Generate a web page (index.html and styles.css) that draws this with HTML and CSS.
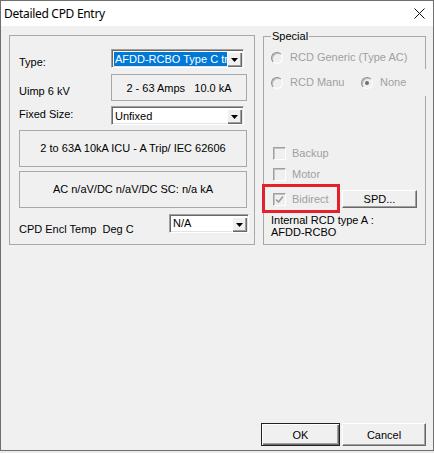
FILE: index.html
```html
<!DOCTYPE html>
<html lang="en">
<head>
    <meta charset="UTF-8">
    <title>Detailed CPD Entry</title>
    <link rel="stylesheet" href="styles.css">
</head>
<body>
    <div class="window">
        <div class="titlebar">
            <span class="title">Detailed CPD Entry</span>
            <svg class="close" width="11" height="11" viewBox="0 0 11 11">
                <path d="M0.5 0.5L10.5 10.5M10.5 0.5L0.5 10.5" stroke="#111" stroke-width="1"/>
            </svg>
        </div>

        <div class="client">
            <div class="panels">
                <div class="group left-group">
                    <div class="row row-type">
                        <span class="label label-type">Type:</span>
                        <div class="combo combo-main">
                            <span class="combo-text selected">AFDD-RCBO Type C trip</span>
                            <span class="drop"><svg width="7" height="4" viewBox="0 0 7 4"><path d="M0 0H7L3.5 4Z" fill="#000"/></svg></span>
                        </div>
                    </div>
                    <div class="row row-uimp">
                        <span class="label label-uimp">Uimp 6 kV</span>
                        <div class="info info-small">2 - 63 Amps&nbsp;&nbsp;&nbsp;10.0 kA</div>
                    </div>
                    <div class="row row-fixed">
                        <span class="label label-fixed">Fixed Size:</span>
                        <div class="combo combo-main">
                            <span class="combo-text">Unfixed</span>
                            <span class="drop"><svg width="7" height="4" viewBox="0 0 7 4"><path d="M0 0H7L3.5 4Z" fill="#000"/></svg></span>
                        </div>
                    </div>
                    <div class="info info-wide info-a">2 to 63A 10kA ICU - A Trip/ IEC 62606</div>
                    <div class="info info-wide info-b">AC n/aV/DC n/aV/DC SC: n/a kA</div>
                    <div class="row row-temp">
                        <span class="label label-temp">CPD Encl Temp&nbsp; Deg C</span>
                        <div class="combo combo-temp">
                            <span class="combo-text top">N/A</span>
                            <span class="drop"><svg width="7" height="4" viewBox="0 0 7 4"><path d="M0 0H7L3.5 4Z" fill="#000"/></svg></span>
                        </div>
                    </div>
                </div>

                <div class="group special-group">
                    <span class="caption">Special</span>
                    <div class="opt-row opt-first">
                        <span class="radio"></span>
                        <span class="disabled">RCD Generic (Type AC)</span>
                    </div>
                    <div class="opt-row opt-second">
                        <span class="radio"></span>
                        <span class="disabled opt-manu">RCD Manu</span>
                        <span class="radio checked"></span>
                        <span class="disabled">None</span>
                    </div>
                    <div class="check-row check-backup">
                        <span class="check"></span>
                        <span class="disabled">Backup</span>
                    </div>
                    <div class="check-row check-motor">
                        <span class="check"></span>
                        <span class="disabled">Motor</span>
                    </div>
                    <div class="check-row check-bidirect">
                        <div class="check-item">
                            <span class="check"><svg width="9" height="9" viewBox="0 0 9 9"><path d="M1 4.5L3.5 7L8 1.5" stroke="#9c9c9c" stroke-width="1.6" fill="none"/></svg></span>
                            <span class="disabled">Bidirect</span>
                        </div>
                        <button class="btn btn-spd">SPD...</button>
                    </div>
                    <div class="internal">Internal RCD type A :<br>AFDD-RCBO</div>
                    <div class="highlight"></div>
                </div>
            </div>

            <div class="buttons">
                <button class="btn btn-ok default">OK</button>
                <button class="btn btn-cancel">Cancel</button>
            </div>
        </div>
    </div>
</body>
</html>
```

FILE: styles.css
```css
body {
    margin: 0;
    background-color: #ececec;
    font-family: "Liberation Sans", Arial, sans-serif;
    font-size: 11px;
    color: #000;
}

.window {
    width: 434px;
    height: 451px;
    box-sizing: border-box;
    border: 1px solid #6f6f6f;
    background-color: #f0f0f0;
    display: flex;
    flex-direction: column;
}

.titlebar {
    height: 25px;
    flex: none;
    background-color: #fff;
    display: flex;
    align-items: center;
    justify-content: space-between;
    padding: 0 8px 0 3px;
}

.titlebar .title {
    font-family: "Noto Sans", sans-serif;
    font-size: 12px;
    letter-spacing: -0.3px;
    color: #000;
}

.client {
    flex: 1;
    display: flex;
    flex-direction: column;
    padding: 9px 7px 4px 8px;
}

.panels {
    display: flex;
    align-items: flex-start;
    gap: 8px;
}

.group {
    box-sizing: border-box;
    border: 1px solid #a8a8a8;
}

.left-group {
    width: 246px;
    height: 210px;
    padding: 13px 0 0 9px;
}

.row {
    display: flex;
    align-items: flex-start;
}

.label {
    line-height: 13px;
    white-space: nowrap;
}

.row-type .label,
.row-uimp .label,
.row-fixed .label {
    width: 92px;
}

.label-type { margin-top: 7px; }
.label-uimp { margin-top: 11px; }
.label-fixed { margin-top: 2px; }
.label-temp { margin-top: 9px; width: 150px; }

.row-uimp { margin-top: 5px; }
.row-fixed { margin-top: 5px; }
.info-a { margin-top: 5px; }
.info-b { margin-top: 4px; }
.row-temp { margin-top: 6px; }

.combo {
    display: flex;
    height: 19px;
    box-sizing: border-box;
    padding: 1px;
    border: 1px solid;
    border-color: #a0a0a0 #fff #fff #a0a0a0;
    box-shadow: inset 1px 1px 0 #696969, inset -1px -1px 0 #e3e3e3;
    background-color: #fff;
}

.combo-main {
    width: 133px;
}

.combo-temp {
    width: 80px;
}

.combo-text {
    flex: 1;
    margin: 1px 0 0 1px;
    padding-left: 1px;
    line-height: 15px;
    white-space: nowrap;
    overflow: hidden;
}

.combo-text.selected {
    background-color: #0078d7;
    color: #fff;
}

.combo-text.top {
    line-height: 12px;
}

.drop {
    flex: none;
    width: 15px;
    height: 15px;
    margin-top: 1px;
    background-color: #f0f0f0;
    box-shadow: inset 1px 1px 0 #fff, inset -1px -1px 0 #696969, inset -2px -2px 0 #a0a0a0;
    display: flex;
    align-items: center;
    justify-content: center;
}

.info {
    box-sizing: border-box;
    border: 1px solid #a8a8a8;
    text-align: center;
    white-space: nowrap;
}

.info-small {
    width: 136px;
    height: 27px;
    line-height: 23px;
    padding-top: 2px;
}

.info-wide {
    width: 228px;
    height: 37px;
    line-height: 35px;
}

.special-group {
    position: relative;
    width: 163px;
    height: 209px;
    margin-top: 1px;
    padding-top: 14px;
}

.caption {
    position: absolute;
    top: -8px;
    left: 7px;
    padding: 0 1px;
    line-height: 14px;
    background-color: #f0f0f0;
}

.disabled {
    color: #a0a0a0;
    line-height: 13px;
    white-space: nowrap;
}

.opt-row {
    display: flex;
    align-items: center;
    padding-left: 7px;
    gap: 7px;
}

.opt-first {
    height: 13px;
}

.opt-second {
    height: 27px;
    margin-top: 5px;
    margin-right: -3px;
    background-color: #f0f0f0;
}

.opt-manu {
    width: 64px;
}

.radio {
    width: 12px;
    height: 12px;
    flex: none;
    box-sizing: border-box;
    border-radius: 50%;
    border: 1px solid;
    border-color: #8e8e8e #fff #fff #8e8e8e;
    box-shadow: inset 1px 1px 0 #bdbdbd;
    background-color: #f0f0f0;
    display: flex;
    align-items: center;
    justify-content: center;
}

.radio.checked::after {
    content: "";
    width: 4px;
    height: 4px;
    border-radius: 50%;
    background-color: #707070;
}

.check-row {
    display: flex;
    align-items: center;
    padding-left: 9px;
    gap: 6px;
    height: 13px;
}

.check-backup { margin-top: 51px; }
.check-motor { margin-top: 8px; }

.check-bidirect {
    height: 18px;
    margin-top: 9px;
    gap: 0;
}

.check-item {
    width: 69px;
    display: flex;
    align-items: center;
    gap: 6px;
}

.check {
    width: 13px;
    height: 13px;
    flex: none;
    box-sizing: border-box;
    border: 1px solid;
    border-color: #a0a0a0 #fff #fff #a0a0a0;
    box-shadow: inset 1px 1px 0 #c4c4c4;
    background-color: #f0f0f0;
    display: flex;
    align-items: center;
    justify-content: center;
}

.internal {
    margin-top: 6px;
    padding-left: 7px;
    line-height: 12px;
}

.highlight {
    position: absolute;
    left: -2px;
    top: 147px;
    width: 78px;
    height: 29px;
    box-sizing: border-box;
    border: 3px solid #e3202b;
}

.btn {
    box-sizing: border-box;
    padding: 0;
    border: 1px solid;
    border-color: #fff #696969 #696969 #fff;
    box-shadow: inset -1px -1px 0 #a0a0a0;
    background-color: #f0f0f0;
    font-family: "Liberation Sans", Arial, sans-serif;
    font-size: 11px;
    color: #000;
}

.btn-spd {
    width: 75px;
    height: 18px;
}

.buttons {
    margin-top: auto;
    display: flex;
    justify-content: flex-end;
    gap: 2px;
}

.btn-ok,
.btn-cancel {
    height: 23px;
}

.btn-ok { width: 79px; }
.btn-cancel { width: 84px; }

.btn.default {
    border-color: #222;
    box-shadow: inset 1px 1px 0 #fff, inset -1px -1px 0 #696969, inset -2px -2px 0 #a0a0a0;
}
```
